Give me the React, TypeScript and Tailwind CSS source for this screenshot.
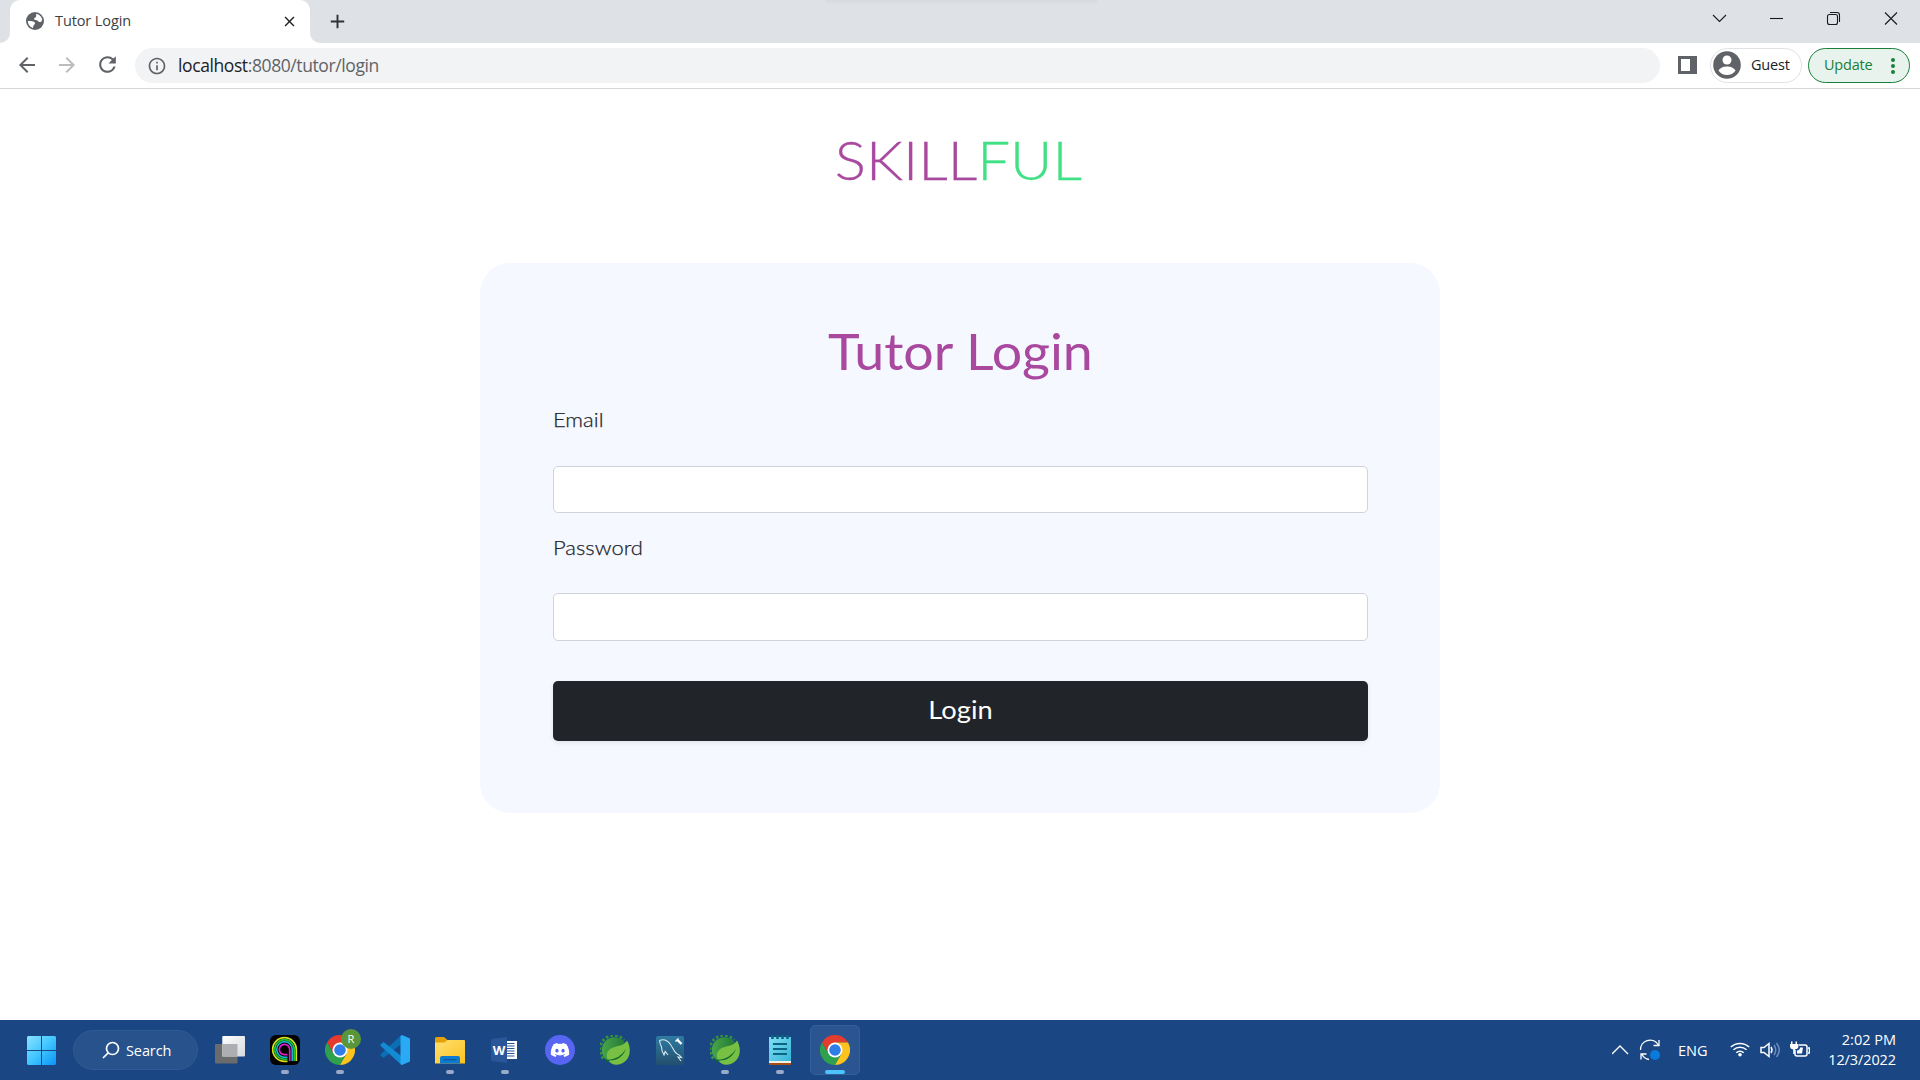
import React from "react";
import { MdArrowBack, MdArrowForward, MdRefresh, MdOutlineInfo, MdClose, MdAdd } from "react-icons/md";
import { FaDiscord } from "react-icons/fa";

const UI = "font-['Open_Sans',sans-serif]";
const BRAND = "font-[Lato,sans-serif]";

function Globe() {
  return (
    <svg viewBox="0 0 18 18" className="size-[18px] -translate-y-px">
      <circle cx="9" cy="9" r="9" fill="#5f6368" />
      <path
        d="M10.500 1.800C13 2.200 15.500 4.500 16.200 7.500L15.500 9.500C14 10.500 12.500 10.200 12 9C11.500 8 10 8.300 8.800 7.800C7.500 7.200 8 5.800 9.300 5.500C10.800 5.200 9.700 3 10.500 1.800Z"
        fill="#fff"
      />
      <path
        d="M1.800 9C3.500 8.800 6.500 8.800 8 9.800C9.800 11 8.800 12.500 7.800 13.200C7 13.800 7.500 15 6.800 16C4 15.200 1.900 12.500 1.800 9Z"
        fill="#fff"
      />
    </svg>
  );
}

function ChromeLogo() {
  return (
    <svg viewBox="0 0 48 48" className="size-[30px]">
      <path d="M3.2 12A24 24 0 0 1 44.8 12H24L13.6 30Z" fill="#e33b2e" />
      <path d="M3.2 12A24 24 0 0 0 24 48L34.4 30H13.6Z" fill="#2da14c" />
      <path d="M24 48A24 24 0 0 0 44.8 12H24L34.4 30Z" fill="#fcc31e" />
      <circle cx="24" cy="24" r="12" fill="#fff" />
      <circle cx="24" cy="24" r="9.3" fill="#2f7de9" />
    </svg>
  );
}

function SpringLogo() {
  return (
    <svg viewBox="0 0 30 30" className="size-[30px]">
      <defs>
        <linearGradient id="springGear" x1="0" y1="0" x2="1" y2="0">
          <stop offset="0" stopColor="#48a548" />
          <stop offset="1" stopColor="#1f7535" />
        </linearGradient>
      </defs>
      <circle cx="14.500" cy="15" r="12.700" fill="url(#springGear)" />
      <path d="M3.500 23.500A13.500 13.500 0 0 1 24 5" fill="none" stroke="#35903f" strokeWidth="3" strokeDasharray="2.700 2" />
      <path d="M27 5.500C24 11 17 10.500 12 13C7 15.500 5.500 20 8 25C10 28 13 30 17 29.800C25 29 30 23 29.800 15C29.700 11 28.500 8 27 5.500Z" fill="#78c043" />
      <path d="M4.500 24.500C14 25.500 21 22 26 13.500C23.500 21 18 25.500 9.500 25.500L7 27.500Z" fill="#0c6a30" />
    </svg>
  );
}

function WindowsLogo() {
  return (
    <svg viewBox="0 0 29 29" className="size-[29px]">
      <defs>
        <linearGradient id="win" x1="0" y1="0" x2="1" y2="1">
          <stop offset="0" stopColor="#8be3ff" />
          <stop offset=".5" stopColor="#41c5ff" />
          <stop offset="1" stopColor="#0a94f6" />
        </linearGradient>
      </defs>
      <path d="M1 0H14V14H0V1ZM15 0H28L29 1V14H15ZM0 15H14V29H1L0 28ZM15 15H29V28L28 29H15Z" fill="url(#win)" />
    </svg>
  );
}

function TaskView() {
  return (
    <svg viewBox="0 0 30 30" className="size-[30px]">
      <defs>
        <linearGradient id="tv" x1="0" y1="0" x2="1" y2="1">
          <stop offset="0" stopColor="#fff" />
          <stop offset="1" stopColor="#d6d8dc" />
        </linearGradient>
      </defs>
      <rect x="0" y="9" width="22.500" height="19.500" rx="1" fill="#6a6b6d" />
      <rect x="7.300" y="1" width="22.700" height="20.500" rx="1" fill="url(#tv)" />
      <path d="M7.300 9H22.500V21.500H7.300Z" fill="#acaeb1" />
    </svg>
  );
}

function RainbowA() {
  const rings = [
    ["#d8e01c", 11.8],
    ["#22c02e", 9.8],
    ["#18b8c8", 7.8],
    ["#e01fd2", 5.2],
  ] as const;
  return (
    <svg viewBox="0 0 30 30" className="size-[30px]">
      <rect width="30" height="30" rx="6" fill="#000" />
      {rings.map(([color, r]) => (
        <path
          key={color}
          d={`M${14.5 + r} 26V14.500A${r} ${r} 0 1 0 14.500 ${14.5 + r}H17.500`}
          fill="none"
          stroke={color}
          strokeWidth="1.700"
        />
      ))}
    </svg>
  );
}

function VsCode() {
  return (
    <svg viewBox="0 0 30 30" className="size-[30px]">
      <path d="M22 8.500L3.500 23L.5 20.600V19.300L21.500 0L22 .5Z" fill="#0a6fb5" />
      <path d="M22 21.500L3.500 7L.5 9.400V10.700L21.500 30L22 29.500Z" fill="#128bd4" />
      <path d="M22 0L30 3.500V26.500L22 30L20.500 29V1Z" fill="#2aaaf4" />
    </svg>
  );
}

function Folder() {
  return (
    <svg viewBox="0 0 30 30" className="size-[30px]">
      <defs>
        <linearGradient id="fold" x1="0" y1="0" x2="1" y2="1">
          <stop offset="0" stopColor="#ffdf72" />
          <stop offset="1" stopColor="#fbc21e" />
        </linearGradient>
      </defs>
      <path d="M0 3.500Q0 2 1.500 2H9L12.500 5H29Q30 5 30 6.500V12H0Z" fill="#e3a008" />
      <path d="M0 7.500H9.500L12.500 5H29Q30 5 30 6.500V28.500H0Z" fill="url(#fold)" />
      <path d="M5 28.500V23Q5 21 7 21H23Q25 21 25 23V28.500Z" fill="#0d7bd0" />
      <path d="M8.500 24.800H21.500" stroke="#0a4f8f" strokeWidth="1" />
    </svg>
  );
}

function WordLogo() {
  return (
    <div className="flex h-[27px] -translate-x-px items-center">
      <div className="flex h-[26px] w-[16px] items-center justify-center bg-[#2a5699] font-['Open_Sans',sans-serif] text-[13px] leading-none font-bold text-white [clip-path:polygon(0_8%,100%_0,100%_100%,0_92%)]">
        W
      </div>
      <svg viewBox="0 0 10 18" className="h-[18px] w-[10px]">
        <path d="M0 0H10V18H0Z" fill="#fff" />
        <path d="M0 2.500H7.500M0 5H7.500M0 7.500H7.500M0 10H7.500M0 12.500H7.500M0 15H7.500" stroke="#2a5699" strokeWidth="1" />
      </svg>
    </div>
  );
}

function MySql() {
  return (
    <svg viewBox="0 0 28 29" className="h-[29px] w-[28px]">
      <defs>
        <linearGradient id="sql" x1="0" y1="0" x2="0" y2="1">
          <stop offset="0" stopColor="#2f7ba3" />
          <stop offset="1" stopColor="#234f6e" />
        </linearGradient>
      </defs>
      <rect width="28" height="29" rx="2" fill="url(#sql)" />
      <path
        d="M3.500 4.500C8 2.500 12 5 14.500 8.500C17 12 17.500 15 20.500 17.500C23 18.500 24.500 20 25.500 21.500L22 21L25 25M3.500 4.500C4 8 4.500 9 5.500 11C5.500 14 6 16 8 19L9.200 15.500L12 19"
        fill="none"
        stroke="#d8e8f0"
        strokeWidth="1.100"
      />
      <path d="M21 3.500L25.500 8" stroke="#fff" strokeWidth="2.400" />
      <path d="M19.500 5.500L22.500 2.500" stroke="#fff" strokeWidth="1.500" />
    </svg>
  );
}

function Notepad() {
  return (
    <svg viewBox="0 0 22 30" className="h-[30px] w-[22px]">
      <defs>
        <linearGradient id="note" x1="0" y1="0" x2="1" y2="1">
          <stop offset="0" stopColor="#83e0f2" />
          <stop offset="1" stopColor="#35b4d6" />
        </linearGradient>
      </defs>
      <path d="M0 25H22V30H0Z" fill="#a64f13" />
      <path d="M0 25H22V28H0Z" fill="#f3efe9" />
      <path d="M0 2H22V26H0Z" fill="url(#note)" />
      <path d="M3.500 0V4M8.500 0V4M13.500 0V4M18.500 0V4" stroke="#0a6484" strokeWidth="2.600" />
      <path d="M4 9H18M4 14H18M4 19H18" stroke="#0a6484" strokeWidth="1.800" />
    </svg>
  );
}

type Indicator = "none" | "open" | "active";

function TaskItem({ children, state = "none" }: { children: React.ReactNode; state?: Indicator }) {
  return (
    <div
      className={
        state === "active"
          ? "relative flex h-[50px] w-[50px] items-center justify-center rounded-[5px] border border-[#335f9a] bg-[#2b5590]"
          : "relative flex h-[50px] w-[50px] items-center justify-center"
      }
    >
      {children}
      {state === "open" && <span className="absolute bottom-[1px] h-[4px] w-[8px] rounded-full bg-[#9aa9c8]" />}
      {state === "active" && <span className="absolute bottom-0 h-[4px] w-[20px] rounded-full bg-[#4cc2ff]" />}
    </div>
  );
}

function TabStrip() {
  return (
    <div className="relative flex h-[43px] bg-[#dee1e6]">
      <div className="absolute top-0 left-[825px] h-[4px] w-[272px] bg-linear-to-b from-[#d8dadf] to-[#dcdfe4]" />
      <div className="flex w-[10px] bg-white">
        <div className="w-full rounded-br-[10px] bg-[#dee1e6]" />
      </div>
      <div className="flex w-[300px] bg-[#dee1e6]">
        <div className="flex h-full w-full items-center rounded-t-[10px] bg-white pl-[16px]">
          <Globe />
          <span className="ml-[11px] w-[226px] -translate-y-px text-[14.500px] tracking-[-0.1px] text-[#3c4043]">Tutor Login</span>
          <MdClose className="size-[17px] text-[#202124]" />
        </div>
      </div>
      <div className="flex w-[10px] bg-white">
        <div className="w-full rounded-bl-[10px] bg-[#dee1e6]" />
      </div>
      <MdAdd className="mt-[10px] ml-[6px] size-[23px] text-[#303336]" />
      <svg viewBox="0 0 210 37" className="ml-auto h-[37px] w-[210px]" fill="none" stroke="#1b1b1b" strokeWidth="1.100">
        <path d="M3 15L9.500 21.500L16 15" />
        <path d="M60 18.500H73" />
        <rect x="117.500" y="14.500" width="10" height="10" rx="2" />
        <path d="M120 12.500H127Q129.500 12.500 129.500 15V22" />
        <path d="M175 12.500L187 24.500M187 12.500L175 24.500" />
      </svg>
    </div>
  );
}

function Toolbar() {
  return (
    <div className="flex h-[46px] items-center border-b border-[#d5d7da] bg-white pr-[10px] pl-[15px]">
      <MdArrowBack className="size-[24px] -translate-y-px text-[#5f6368]" />
      <MdArrowForward className="ml-[16px] size-[24px] -translate-y-px text-[#babcbe]" />
      <MdRefresh className="ml-[16px] size-[25px] -translate-y-px text-[#5f6368]" />
      <div className="ml-[15px] flex h-[35px] w-[1525px] items-center rounded-full bg-[#f1f3f4] pl-[12px]">
        <MdOutlineInfo className="size-[20px] text-[#5f6368]" />
        <span className="ml-[11px] text-[17.500px] leading-none tracking-[-0.400px] text-[#5f6368]">
          <span className="text-[#202124]">localhost</span>:8080/tutor/login
        </span>
      </div>
      <div className="ml-[18px] flex h-[18px] w-[19px] -translate-y-px justify-end border-[3px] border-[#5f6368]">
        <div className="w-[4px] bg-[#5f6368]" />
      </div>
      <div className="ml-[13px] flex h-[35px] w-[92px] items-center rounded-full border border-[#dfe1e5] pl-[2px]">
        <svg viewBox="0 0 28 28" className="size-[28px] -translate-y-px">
          <circle cx="14" cy="14" r="13.800" fill="#5f6368" />
          <circle cx="14" cy="9" r="4.500" fill="#fff" />
          <path d="M5.500 19.500C8 16 11 15.500 14 15.500S20 16 22.500 19.500C20.500 22.500 17.500 24 14 24S7.500 22.500 5.500 19.500Z" fill="#fff" />
        </svg>
        <span className="ml-[10px] -translate-y-px text-[14.500px] tracking-[-0.200px] text-[#202124]">Guest</span>
      </div>
      <div className="ml-[6px] flex h-[35px] w-[102px] items-center justify-between rounded-full border border-[#188038] bg-[#e9f3ed] pr-[14px] pl-[15px]">
        <span className="-translate-y-px text-[14.500px] tracking-[-0.200px] text-[#188038]">Update</span>
        <span className="flex flex-col gap-[2px]">
          <span className="size-[4px] rounded-full bg-[#188038]" />
          <span className="size-[4px] rounded-full bg-[#188038]" />
          <span className="size-[4px] rounded-full bg-[#188038]" />
        </span>
      </div>
    </div>
  );
}

function LoginPage() {
  return (
    <main className={`flex h-[931px] flex-col items-center bg-white ${BRAND}`}>
      <h1 className="mt-[41px] mr-[3px] h-[60px] scale-x-[1.1] text-[53px] leading-[60px] font-light whitespace-nowrap text-[#a9489f] [-webkit-text-stroke:0.3px]">
        SKILL<span className="text-[#41e085]">FUL</span>
      </h1>
      <form className="mt-[73px] flex h-[550px] w-[960px] flex-col rounded-[30px] bg-[#f5f8ff] px-[72.500px] pt-[58px]">
        <h2 className="h-[60px] scale-x-[1.075] text-center text-[50px] leading-[60px] font-normal text-[#a9489f]">Tutor Login</h2>
        <label className="mt-[23px] h-[30px] origin-left scale-x-[1.1] text-[20px] leading-[30px] font-light text-[#212529] [-webkit-text-stroke:0.25px]">Email</label>
        <input className="mt-[32px] h-[47px] rounded-[5px] border border-[#ced4da] bg-white" />
        <label className="mt-[19px] h-[30px] origin-left scale-x-[1.1] text-[20px] leading-[30px] font-light text-[#212529] [-webkit-text-stroke:0.25px]">Password</label>
        <input className="mt-[31px] h-[48px] rounded-[5px] border border-[#ced4da] bg-white" />
        <button type="button" className="mt-[40px] h-[60px] rounded-[5px] bg-[#212529] pb-[2px] text-[25px] text-white shadow-[0_2px_5px_rgba(0,0,0,0.08)]">
          <span className="inline-block scale-x-[1.09]">Login</span>
        </button>
      </form>
    </main>
  );
}

function Tray() {
  return (
    <div className="ml-auto flex items-center text-white">
      <svg viewBox="0 0 48 30" className="h-[30px] w-[48px]" fill="none" stroke="#fff" strokeWidth="1.300">
        <path d="M0 19L8 11L16 19" />
        <path d="M28.500 15A9.500 9.500 0 0 1 46 9.500M47 5V10.500H41.500M37 24.500A9.500 9.500 0 0 1 30 19.500M29 24.500V19H34.500" />
        <circle cx="43" cy="20" r="5" fill="#0a7bdc" stroke="none" />
      </svg>
      <span className="ml-[18px] w-[30px] translate-y-px text-[14.500px]">ENG</span>
      <svg viewBox="0 0 80 30" className="ml-[22px] h-[30px] w-[80px]" fill="none" stroke="#fff" strokeWidth="1.500">
        <path d="M.8 12A13.500 13.500 0 0 1 19.200 12M3.500 14.800A9.500 9.500 0 0 1 16.500 14.800M6.300 17.800A5.500 5.500 0 0 1 13.700 17.800" />
        <circle cx="10" cy="19.800" r="1.800" fill="#fff" stroke="none" />
        <path d="M31 12.500H34L39 8.500V21.500L34 17.500H31ZM41 12Q43 15 41 18" />
        <path d="M44 10Q47.500 15 44 20M46.500 8Q52 15 46.500 22" stroke="#6d8db8" />
        <path d="M69 10H75Q77 10 77 12V19Q77 21 75 21H67Q65 21 65 19V15M78 13H79.500V18H78" />
        <path d="M70 12.500H73L72 18.500H67V15.500Q70 15 70 12.500Z" fill="#fff" stroke="none" />
        <path d="M61 6.500H62.500V9H65.500V6.500H67V9H68.500V11Q68.500 14 64.800 14.500V19H63.200V14.500Q60 14 60 11V9H61Z" fill="#fff" stroke="none" />
      </svg>
      <div className="w-[86px] text-right text-[14.500px] leading-[20px]">
        <div>2:02 PM</div>
        <div className="tracking-[-0.100px]">12/3/2022</div>
      </div>
    </div>
  );
}

function Taskbar() {
  return (
    <div className="flex h-[60px] items-center bg-[#1a4683] pr-[24px] pl-[27px]">
      <WindowsLogo />
      <div className="ml-[17px] flex h-[40px] w-[125px] items-center rounded-full border border-[#305a92] bg-[#28528b] pl-[28px] text-white">
        <svg viewBox="0 0 18 18" className="size-[18px]" fill="none" stroke="#fff" strokeWidth="1.700">
          <circle cx="10.500" cy="7.500" r="6" />
          <path d="M6.200 11.800L1 17" />
        </svg>
        <span className="ml-[6px] translate-y-px text-[14.500px] tracking-[-0.100px]">Search</span>
      </div>
      <div className="ml-[7px] flex gap-[5px]">
        <TaskItem><TaskView /></TaskItem>
        <TaskItem state="open"><RainbowA /></TaskItem>
        <TaskItem state="open">
          <ChromeLogo />
          <span className="absolute top-[4px] left-[26px] flex size-[20px] items-center justify-center rounded-full bg-[#5a9639] text-[11px] text-white">R</span>
        </TaskItem>
        <TaskItem><VsCode /></TaskItem>
        <TaskItem state="open"><Folder /></TaskItem>
        <TaskItem state="open"><WordLogo /></TaskItem>
        <TaskItem>
          <span className="flex size-[30px] items-center justify-center rounded-full bg-[#5865f2]">
            <FaDiscord className="size-[20px] text-white" />
          </span>
        </TaskItem>
        <TaskItem><SpringLogo /></TaskItem>
        <TaskItem><MySql /></TaskItem>
        <TaskItem state="open"><SpringLogo /></TaskItem>
        <TaskItem state="open"><Notepad /></TaskItem>
        <TaskItem state="active"><ChromeLogo /></TaskItem>
      </div>
      <Tray />
    </div>
  );
}

export default function App() {
  return (
    <div className={`flex h-[1080px] w-[1920px] flex-col overflow-hidden ${UI}`}>
      <TabStrip />
      <Toolbar />
      <LoginPage />
      <Taskbar />
    </div>
  );
}
